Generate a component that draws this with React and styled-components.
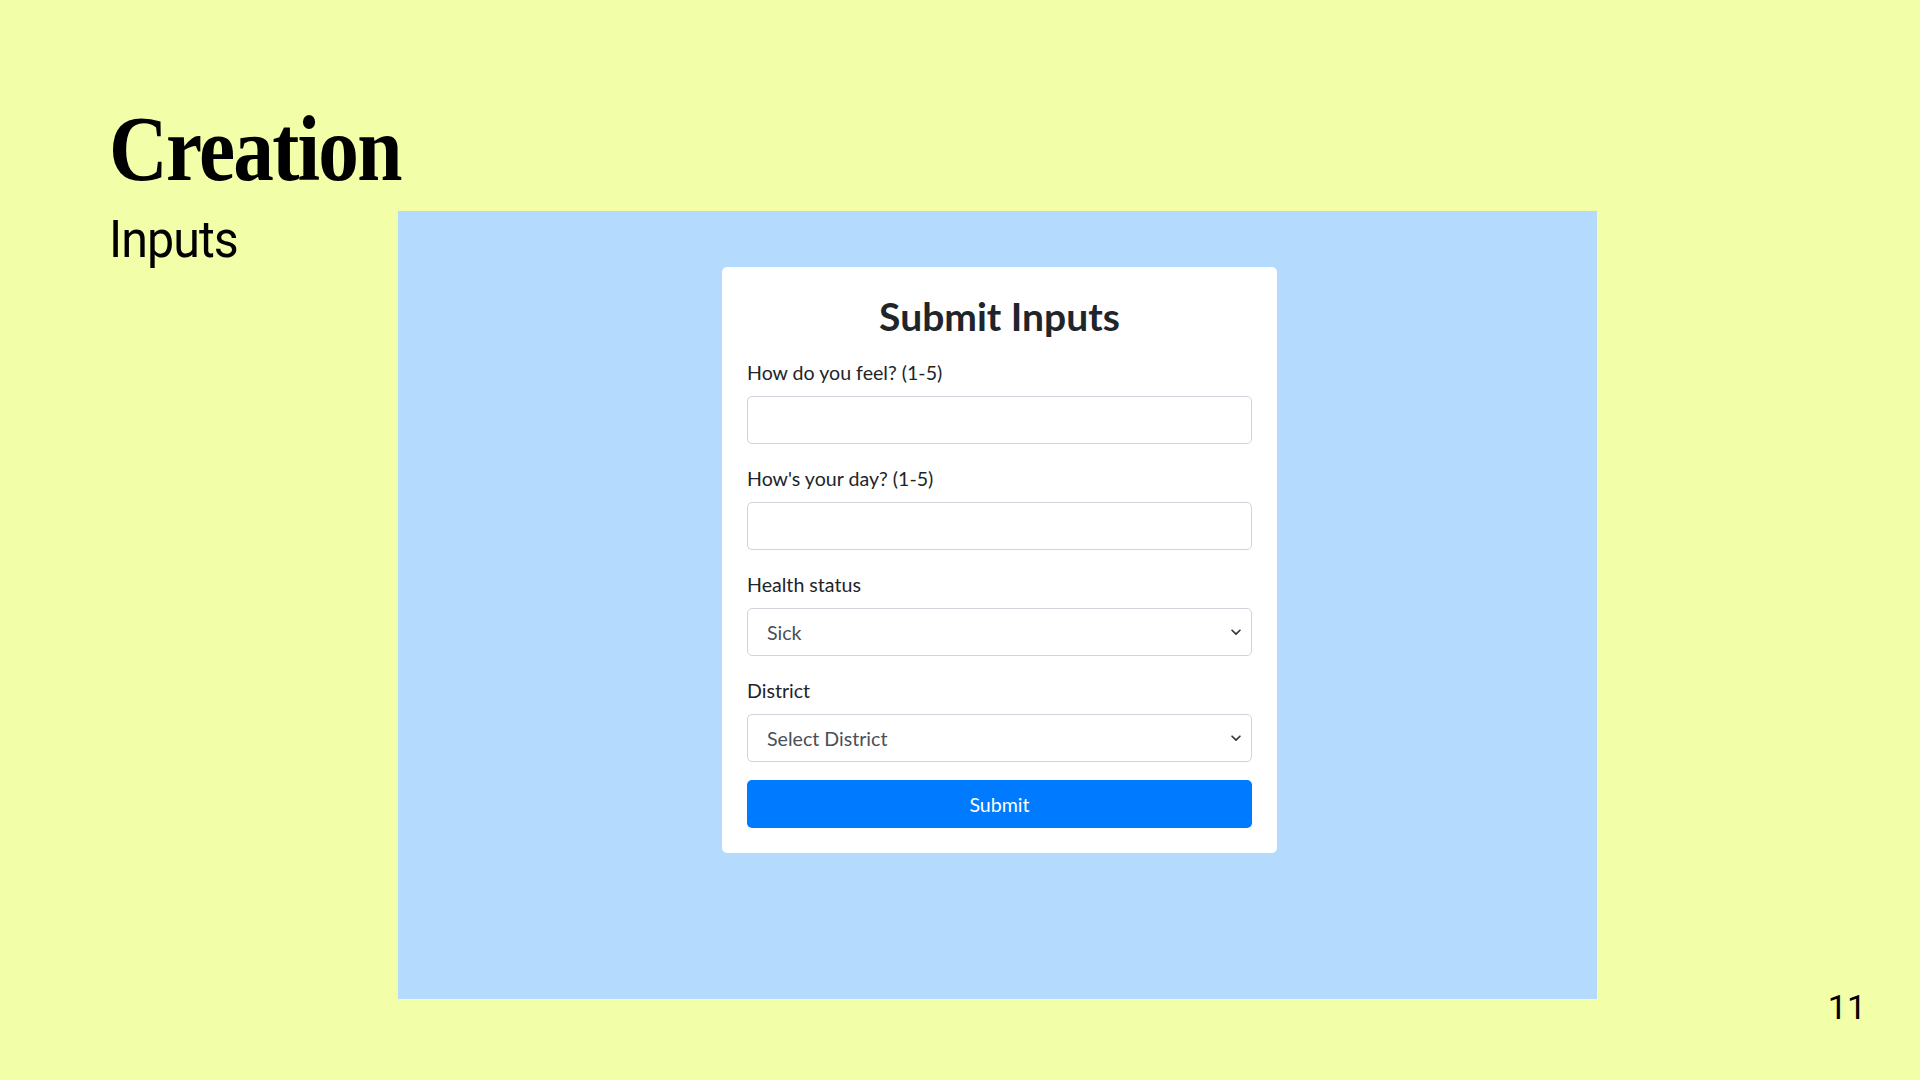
import React from "react";
import styled, { createGlobalStyle } from "styled-components";

const Global = createGlobalStyle`
  html, body { margin: 0; padding: 0; }
  body { background: #f3fea8; }
  * { box-sizing: border-box; }
`;

const Slide = styled.div`
  width: 1920px;
  height: 1080px;
  background: #f3fea8;
  padding: 102px 0 0 109px;
  display: flex;
  flex-direction: column;
  overflow: hidden;
`;

const Heading = styled.h1`
  margin: 0;
  font-family: "Liberation Serif", "DejaVu Serif", serif;
  font-weight: 700;
  font-size: 94px;
  line-height: 92px;
  letter-spacing: -2px;
  color: #000;
  transform: scaleX(0.865);
  transform-origin: left center;
`;

const Row = styled.div`
  display: flex;
  margin-top: 17px;
`;

const SideCol = styled.div`
  width: 289px;
  flex: none;
`;

const Subtitle = styled.h2`
  margin: 4px 0 0;
  font-family: "Roboto", "Liberation Sans", sans-serif;
  font-weight: 400;
  font-size: 52px;
  line-height: 50px;
  letter-spacing: -1px;
  color: #000;
  transform: scaleX(0.93);
  transform-origin: left center;
`;

const Panel = styled.div`
  width: 1199px;
  height: 788px;
  flex: none;
  background: #b4dafd;
  display: flex;
  justify-content: center;
  align-items: flex-start;
  padding-top: 56px;
  padding-left: 4px;
`;

const PageNum = styled.div`
  flex: 1;
  display: flex;
  justify-content: flex-end;
  align-items: flex-end;
  padding-right: 54px;
  margin-bottom: -26px;
  font-family: "Roboto", "Liberation Sans", sans-serif;
  font-size: 34px;
  line-height: 35px;
  color: #000;
`;

const Card = styled.form`
  width: 555px;
  background: #fff;
  border-radius: 5px;
  padding: 26px 25px 25px;
  font-family: "Lato", "Noto Sans", sans-serif;
  color: #212529;
`;

const CardTitle = styled.h3`
  margin: 0 0 18px;
  text-align: center;
  font-family: "Lato", "Noto Sans", sans-serif;
  font-weight: 700;
  font-size: 39px;
  line-height: 47px;
  color: #212529;
`;

const Group = styled.div`
  display: flex;
  flex-direction: column;
  gap: 9px;
  margin-bottom: ${(p) => (p.$last ? "18px" : "20px")};
`;

const Label = styled.label`
  font-size: 19.6px;
  line-height: 29px;
  color: #212529;
`;

const Field = styled.div`
  position: relative;
  height: 48px;
  border: 1px solid #ced4da;
  border-radius: 5px;
  background: #fff;
  display: flex;
  align-items: center;
  padding: 0 19px;
  font-size: 19.6px;
  color: #495057;
`;

const Chevron = styled.svg`
  position: absolute;
  right: 8px;
  top: 50%;
  transform: translateY(-50%);
`;

const Button = styled.div`
  height: 48px;
  border-radius: 5px;
  background: #007bff;
  color: #fff;
  display: flex;
  align-items: center;
  justify-content: center;
  font-size: 19.6px;
`;

const ChevronIcon = () => (
  <Chevron width="14" height="14" viewBox="0 0 16 16">
    <path d="M3.5 6 L8 10.5 L12.5 6" fill="none" stroke="#343a40" strokeWidth="2" strokeLinecap="round" strokeLinejoin="round" />
  </Chevron>
);

export default function App() {
  return (
    <>
      <Global />
      <Slide>
        <Heading>Creation</Heading>
        <Row>
          <SideCol>
            <Subtitle>Inputs</Subtitle>
          </SideCol>
          <Panel>
            <Card>
              <CardTitle>Submit Inputs</CardTitle>
              <Group>
                <Label>How do you feel? (1-5)</Label>
                <Field />
              </Group>
              <Group>
                <Label>How's your day? (1-5)</Label>
                <Field />
              </Group>
              <Group>
                <Label>Health status</Label>
                <Field>
                  Sick
                  <ChevronIcon />
                </Field>
              </Group>
              <Group $last>
                <Label>District</Label>
                <Field>
                  Select District
                  <ChevronIcon />
                </Field>
              </Group>
              <Button>Submit</Button>
            </Card>
          </Panel>
          <PageNum>11</PageNum>
        </Row>
      </Slide>
    </>
  );
}
